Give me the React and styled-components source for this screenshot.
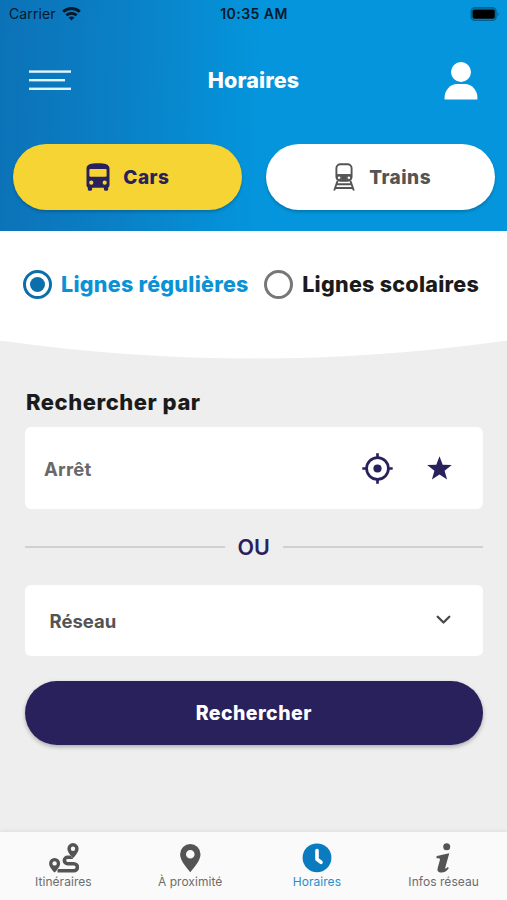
import React, { useState } from 'react';
import styled, { createGlobalStyle } from 'styled-components';

const GlobalStyle = createGlobalStyle`
  * {
    box-sizing: border-box;
  }

  body {
    margin: 0;
    background: #eeeeee;
  }

  button {
    font-family: inherit;
    border: none;
    padding: 0;
    margin: 0;
    background: none;
    cursor: pointer;
  }

  svg {
    display: block;
    flex-shrink: 0;
  }
`;

const Screen = styled.div`
  width: 507px;
  height: 900px;
  display: flex;
  flex-direction: column;
  overflow: hidden;
  background: #eeeeee;
  font-family: Inter, 'Liberation Sans', sans-serif;
`;

const Header = styled.header`
  height: 231px;
  flex-shrink: 0;
  background: linear-gradient(92deg, #0c72b7 0%, #0a80c6 24%, #0495dc 51%);
`;

const StatusBar = styled.div`
  height: 27px;
  display: grid;
  grid-template-columns: 1fr auto 1fr;
  align-items: center;
  padding: 0 8px 0 9px;
  color: #04192b;
  font-size: 14px;
`;

const Carrier = styled.div`
  display: flex;
  align-items: center;
  gap: 6px;
  letter-spacing: 0.1px;
`;

const Time = styled.div`
  font-weight: 600;
  letter-spacing: 0.45px;
`;

const Battery = styled.div`
  justify-self: end;
`;

const TitleBar = styled.div`
  height: 106px;
  display: grid;
  grid-template-columns: 42px 1fr 42px;
  align-items: center;
  padding: 0 29px;
`;

const Title = styled.h1`
  margin: 0;
  text-align: center;
  color: white;
  font-size: 21.5px;
  font-weight: 800;
  letter-spacing: 0.15px;
`;

const ModeSwitch = styled.div`
  display: grid;
  grid-template-columns: 1fr 1fr;
  gap: 24px;
  padding: 11px 12.5px 0 13px;
`;

const ModeButton = styled.button`
  height: 66px;
  border-radius: 33px;
  display: flex;
  align-items: center;
  justify-content: center;
  gap: ${props => props.$gap};
  padding-left: ${props => (props.$active ? '1px' : '4px')};
  background: ${props => (props.$active ? '#f5d433' : '#ffffff')};
  color: ${props => (props.$active ? '#29215c' : '#545454')};
  box-shadow: 0 2px 3px rgba(0, 0, 0, 0.2);
  font-size: 19px;
  font-weight: 800;
  letter-spacing: 0.5px;
`;

const Filters = styled.div`
  height: 110px;
  flex-shrink: 0;
  display: flex;
  align-items: flex-start;
  padding: 38px 22.5px 0;
  gap: 15px;
  background: white;
`;

const RadioLabel = styled.button`
  display: flex;
  align-items: center;
  gap: 9.5px;
  height: 30px;
  color: ${props => (props.$checked ? '#0b92d6' : '#1b1b1b')};
  font-size: 21.5px;
  font-weight: 800;
  letter-spacing: 0.27px;
  white-space: nowrap;
`;

const Radio = styled.span`
  width: 29px;
  height: 29px;
  border-radius: 50%;
  border: 3px solid ${props => (props.$checked ? '#0d6eac' : '#777777')};
  display: flex;
  align-items: center;
  justify-content: center;
`;

const RadioDot = styled.span`
  width: 15px;
  height: 15px;
  border-radius: 50%;
  background: #0d6eac;
`;

const Main = styled.main`
  flex: 1;
  display: flex;
  flex-direction: column;
  padding: 29px 24.5px 0 25px;
`;

const SectionTitle = styled.h2`
  margin: 0;
  height: 39px;
  line-height: 28px;
  padding-left: 1px;
  color: #1b1b1b;
  font-size: 22px;
  font-weight: 800;
  letter-spacing: 0.53px;
`;

const SearchBox = styled.div`
  height: 82px;
  border-radius: 6px;
  background: white;
  display: flex;
  align-items: center;
  padding: 0 30.5px 0 19px;
  color: #686868;
  font-size: 18.5px;
  font-weight: 700;
  letter-spacing: 0.2px;
`;

const BoxLabel = styled.span`
  flex: 1;
  padding-top: 2px;
`;

const BoxIcons = styled.div`
  display: flex;
  align-items: center;
  gap: 34px;
`;

const Divider = styled.div`
  height: 76px;
  display: flex;
  align-items: center;
  gap: 13px;
  color: #29215c;
  font-size: 21.5px;
  font-weight: 600;

  &::before,
  &::after {
    content: '';
    flex: 1;
    height: 2px;
    background: #d0d0d0;
  }
`;

const Select = styled.button`
  height: 71px;
  border-radius: 6px;
  background: white;
  display: flex;
  align-items: center;
  justify-content: space-between;
  padding: 0 32px 0 24.5px;
  color: #545454;
  font-size: 18.5px;
  font-weight: 700;

  svg {
    margin-bottom: 2px;
  }
`;

const SubmitButton = styled.button`
  height: 64px;
  margin-top: 25px;
  border-radius: 32px;
  background: #29215c;
  color: white;
  font-size: 19.5px;
  font-weight: 800;
  letter-spacing: 0.45px;
  box-shadow: 0 2px 4px rgba(0, 0, 0, 0.28);
`;

const TabBar = styled.nav`
  height: 68px;
  flex-shrink: 0;
  display: grid;
  grid-template-columns: repeat(4, 1fr);
  background: #fafafa;
  box-shadow: 0 -1px 4px rgba(0, 0, 0, 0.07);
`;

const Tab = styled.button`
  display: flex;
  flex-direction: column;
  align-items: center;
  padding-top: 10px;
  color: ${props => (props.$active ? '#0b7bbf' : '#545454')};
`;

const TabLabel = styled.span`
  font-size: 12px;
  line-height: 16px;
  letter-spacing: 0.05px;
  color: ${props => (props.$active ? '#2a8dcb' : '#6c6c6c')};
`;

const WifiIcon = () => (
  <svg width="19" height="14" viewBox="0 0 19 14" fill="none" stroke="currentColor" strokeWidth="2.8">
    <path d="M1.2 4.8C5.8.4 13.2.4 17.8 4.8" />
    <path d="M4.3 8.300c3-2.700 7.400-2.700 10.400 0" />
    <path d="M9.500 13.500 6.600 10.600c1.600-1.500 4.200-1.500 5.800 0z" fill="currentColor" stroke="none" />
  </svg>
);

const BatteryIcon = () => (
  <svg width="30" height="14" viewBox="0 0 30 14">
    <rect x="2.3" y="0.9" width="24.6" height="12.4" rx="3.4" fill="none" stroke="#000" strokeOpacity="0.35" strokeWidth="1.6" />
    <rect x="3.5" y="2.5" width="22.3" height="9.2" rx="1.8" fill="#000" />
    <path d="M28.5 5v4.400c1.300-.7 1.300-3.700 0-4.400z" fill="#000" fillOpacity="0.4" />
  </svg>
);

const MenuIcon = () => (
  <svg width="42" height="20" viewBox="0 0 42 20" fill="#dff6ff">
    <rect y="0.4" width="42" height="2.4" />
    <rect y="9" width="36" height="2.4" />
    <rect y="17.6" width="42" height="2.4" />
  </svg>
);

const UserIcon = () => (
  <svg width="42" height="40" viewBox="0 0 42 40" fill="#fff">
    <circle cx="25" cy="12" r="10" />
    <path d="M8.600 39.400v-2.200c0-6.900 5.900-13.100 12.400-13.100h8c6.500 0 12.400 6.200 12.400 13.100v2.200z" />
  </svg>
);

const BusIcon = () => (
  <svg width="24" height="28" viewBox="0 0 24 28" fill="currentColor">
    <path
      fillRule="evenodd"
      d="M.5 5.500C.5 1.500 5 .3 12 .3s11.500 1.200 11.500 5.200v16.200c0 1.300-.4 2.200-1.300 2.700v1.900c0 2-4.300 2-4.300 0v-1.600H6.100v1.600c0 2-4.300 2-4.300 0v-1.900C.9 23.900.5 23 .5 21.700zM3.400 7.200c0-.8.4-1.200 1.200-1.200h14.800c.8 0 1.200.4 1.200 1.200v5.300c0 .8-.4 1.200-1.200 1.200H4.600c-.8 0-1.200-.4-1.200-1.200zM5.300 17.600a2.100 2.100 0 1 0 0 4.200 2.100 2.100 0 0 0 0-4.200zM18.700 17.600a2.100 2.100 0 1 0 0 4.200 2.100 2.100 0 0 0 0-4.200z"
    />
  </svg>
);

const TrainIcon = () => (
  <svg width="22" height="28" viewBox="0 0 22 28" fill="none" stroke="currentColor" strokeWidth="1.9">
    <rect x="3.4" y="1.2" width="15.2" height="16.6" rx="4" />
    <path d="M3.400 12h15.200" />
    <rect x="8.2" y="12" width="5.6" height="5.4" fill="currentColor" stroke="none" />
    <circle cx="6.1" cy="14.8" r="2" strokeWidth="1.4" />
    <circle cx="15.9" cy="14.8" r="2" strokeWidth="1.4" />
    <path d="M4.600 17.800 1.200 27.500M17.400 17.800l3.400 9.700M4 21.200h14M2.800 25h16.400" />
  </svg>
);

const LocateIcon = () => (
  <svg width="31" height="31" viewBox="0 0 31 31" fill="none" stroke="#29215c" strokeWidth="2.7">
    <circle cx="15.5" cy="15.5" r="10.9" />
    <circle cx="15.5" cy="15.5" r="4.1" fill="#29215c" stroke="none" />
    <path d="M15.500.3v4.400M15.500 26.300v4.400M.3 15.500h4.400M26.300 15.500h4.400" />
  </svg>
);

const StarIcon = () => (
  <svg width="25" height="25" viewBox="0 0 25 25" fill="#29215c">
    <path d="m12.500.2 3.200 8.600 9.100.3-7.200 5.600 2.500 8.900-7.600-5.200-7.600 5.200 2.500-8.900L.2 9.100l9.100-.3z" />
  </svg>
);

const ChevronIcon = () => (
  <svg width="15" height="10" viewBox="0 0 15 10" fill="none" stroke="#484848" strokeWidth="2.3" strokeLinecap="round" strokeLinejoin="round">
    <path d="m1.700 1.700 5.800 5.800 5.800-5.800" />
  </svg>
);

const RouteIcon = () => (
  <svg width="32" height="32" viewBox="0 0 32 32">
    <path d="M26 15.300h-5.400a3.200 3.200 0 0 0 0 6.400h6.300a3.500 3.500 0 0 1 0 7H10.500" fill="none" stroke="currentColor" strokeWidth="3.6" />
    <path
      fill="currentColor"
      stroke="#fafafa"
      strokeWidth="1"
      paintOrder="stroke"
      fillRule="evenodd"
      d="M26 16.200c-2.300-2.600-5.600-6-5.600-9.500a5.600 5.600 0 0 1 11.200 0c0 3.500-3.300 6.900-5.600 9.500zM26 4.500a2.200 2.200 0 1 0 0 4.400 2.200 2.200 0 0 0 0-4.400zM7.600 30.600c-2.300-2.600-5.500-5.900-5.500-9.200a5.500 5.500 0 0 1 11 0c0 3.300-3.200 6.600-5.500 9.200zM7.600 19.200a2.200 2.200 0 1 0 0 4.400 2.200 2.200 0 0 0 0-4.400z"
    />
  </svg>
);

const PinIcon = () => (
  <svg width="32" height="32" viewBox="0 0 32 32">
    <path
      fill="currentColor"
      fillRule="evenodd"
      d="M16.300 30.200C12.300 25.500 6.100 18.500 6.100 12.300a10.200 10.200 0 0 1 20.400 0c0 6.200-6.200 13.200-10.200 17.900zM16.300 8a4.300 4.300 0 1 0 0 8.600 4.300 4.300 0 0 0 0-8.600z"
    />
  </svg>
);

const ClockIcon = () => (
  <svg width="32" height="32" viewBox="0 0 32 32">
    <circle cx="16" cy="15.8" r="14.4" fill="currentColor" />
    <path d="M16 8.500v8.800l4 3" fill="none" stroke="#fff" strokeWidth="3.6" strokeLinecap="round" strokeLinejoin="round" />
  </svg>
);

const InfoIcon = () => (
  <svg width="32" height="32" viewBox="0 0 32 32" fill="currentColor">
    <circle cx="18.7" cy="4.7" r="3.5" />
    <path d="M8.700 14c3.300-.8 7.700-1.900 12.600-2.800l-4 14.200c-.4 1.500.7 1.600 2.300-.4l1.300.9c-2 3-4.500 4.600-7.500 4.600-3.400 0-4.400-1.900-3.700-4.600l2.200-7.800c.4-1.500-.5-2-3.500-1.800z" />
  </svg>
);

const tabs = [
  { id: 'itineraires', label: 'Itinéraires', Icon: RouteIcon },
  { id: 'proximite', label: 'À proximité', Icon: PinIcon },
  { id: 'horaires', label: 'Horaires', Icon: ClockIcon },
  { id: 'infos', label: 'Infos réseau', Icon: InfoIcon }
];

const lineTypes = ['Lignes régulières', 'Lignes scolaires'];

const App = () => {
  const [mode, setMode] = useState('cars');
  const [lineType, setLineType] = useState(lineTypes[0]);
  const [activeTab, setActiveTab] = useState('horaires');

  return (
    <Screen>
      <GlobalStyle />
      <Header>
        <StatusBar>
          <Carrier>
            Carrier
            <WifiIcon />
          </Carrier>
          <Time>10:35 AM</Time>
          <Battery>
            <BatteryIcon />
          </Battery>
        </StatusBar>

        <TitleBar>
          <MenuIcon />
          <Title>Horaires</Title>
          <UserIcon />
        </TitleBar>

        <ModeSwitch>
          <ModeButton $active={mode === 'cars'} $gap="13px" onClick={() => setMode('cars')}>
            <BusIcon />
            Cars
          </ModeButton>
          <ModeButton $active={mode === 'trains'} $gap="14px" onClick={() => setMode('trains')}>
            <TrainIcon />
            Trains
          </ModeButton>
        </ModeSwitch>
      </Header>

      <Filters>
        {lineTypes.map(type => (
          <RadioLabel key={type} $checked={type === lineType} onClick={() => setLineType(type)}>
            <Radio $checked={type === lineType}>{type === lineType && <RadioDot />}</Radio>
            {type}
          </RadioLabel>
        ))}
      </Filters>
      {/* curved bottom edge of the white panel */}
      <svg width="507" height="18" viewBox="0 0 507 18" fill="#fff">
        <path d="M0 -0.500Q253.500 35.500 507 -0.500z" />
      </svg>

      <Main>
        <SectionTitle>Rechercher par</SectionTitle>
        <SearchBox>
          <BoxLabel>Arrêt</BoxLabel>
          <BoxIcons>
            <LocateIcon />
            <StarIcon />
          </BoxIcons>
        </SearchBox>
        <Divider>OU</Divider>
        <Select>
          Réseau
          <ChevronIcon />
        </Select>
        <SubmitButton>Rechercher</SubmitButton>
      </Main>

      <TabBar>
        {tabs.map(({ id, label, Icon }) => (
          <Tab key={id} $active={id === activeTab} onClick={() => setActiveTab(id)}>
            <Icon />
            <TabLabel $active={id === activeTab}>{label}</TabLabel>
          </Tab>
        ))}
      </TabBar>
    </Screen>
  );
};

export default App;
